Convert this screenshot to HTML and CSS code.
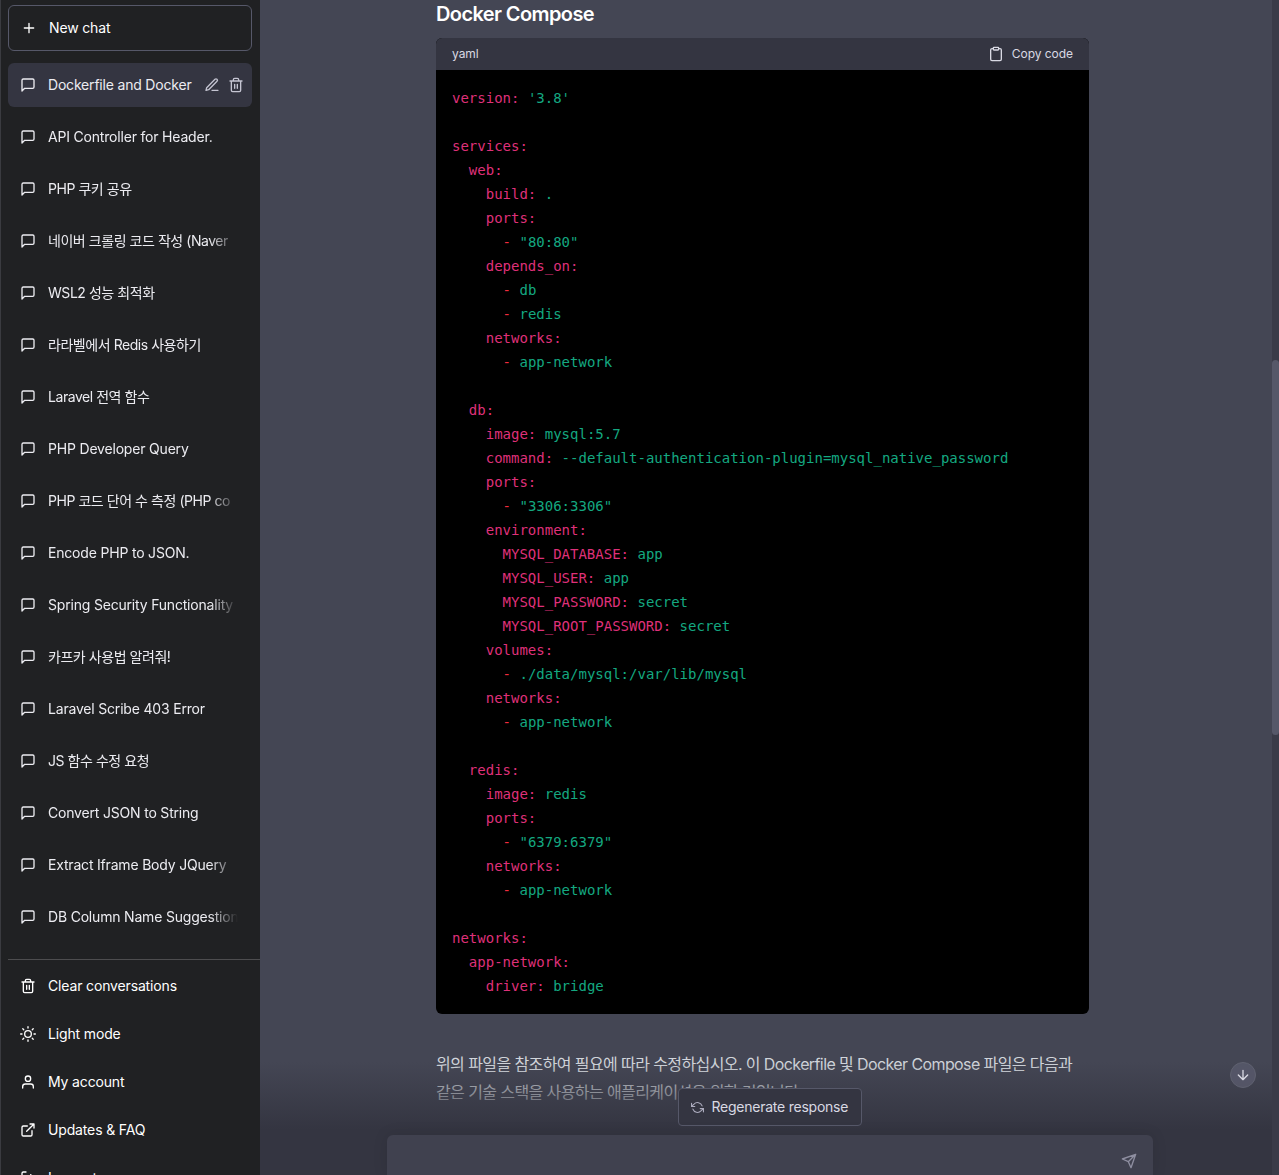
FILE: index.html
```html
<!DOCTYPE html>
<html lang="ko">
<head>
  <meta charset="UTF-8">
  <title>Dockerfile and Docker</title>
  <link rel="stylesheet" href="styles.css">
</head>
<body>
  <svg class="icon-defs" width="0" height="0" aria-hidden="true">
    <symbol id="i-chat" viewBox="0 0 24 24"><path d="M21 15a2 2 0 0 1-2 2H7l-4 4V5a2 2 0 0 1 2-2h14a2 2 0 0 1 2 2z"/></symbol>
    <symbol id="i-trash" viewBox="0 0 24 24"><path d="M3 6h18M19 6v14a2 2 0 0 1-2 2H7a2 2 0 0 1-2-2V6m3 0V4a2 2 0 0 1 2-2h4a2 2 0 0 1 2 2v2M10 11v6M14 11v6"/></symbol>
  </svg>

  <aside class="sidebar">
    <button class="new-chat">
      <svg class="icon" viewBox="0 0 24 24"><path d="M12 5v14M5 12h14"/></svg>
      <span class="label">New chat</span>
    </button>

    <nav class="chat-list">
      <div class="chat-item active">
        <svg class="icon"><use href="#i-chat"/></svg>
        <span class="chat-title">Dockerfile and Docker</span>
        <svg class="icon action" viewBox="0 0 24 24"><path d="M12 20h9M16.5 3.5a2.1 2.1 0 0 1 3 3L7 19l-4 1 1-4z"/></svg>
        <svg class="icon action"><use href="#i-trash"/></svg>
      </div>
      <div class="chat-item"><svg class="icon"><use href="#i-chat"/></svg><span class="chat-title">API Controller for Header.</span></div>
      <div class="chat-item"><svg class="icon"><use href="#i-chat"/></svg><span class="chat-title ko">PHP 쿠키 공유</span></div>
      <div class="chat-item"><svg class="icon"><use href="#i-chat"/></svg><span class="chat-title ko">네이버 크롤링 코드 작성 (Naver</span></div>
      <div class="chat-item"><svg class="icon"><use href="#i-chat"/></svg><span class="chat-title ko">WSL2 성능 최적화</span></div>
      <div class="chat-item"><svg class="icon"><use href="#i-chat"/></svg><span class="chat-title ko">라라벨에서 Redis 사용하기</span></div>
      <div class="chat-item"><svg class="icon"><use href="#i-chat"/></svg><span class="chat-title ko">Laravel 전역 함수</span></div>
      <div class="chat-item"><svg class="icon"><use href="#i-chat"/></svg><span class="chat-title">PHP Developer Query</span></div>
      <div class="chat-item"><svg class="icon"><use href="#i-chat"/></svg><span class="chat-title ko">PHP 코드 단어 수 측정 (PHP co</span></div>
      <div class="chat-item"><svg class="icon"><use href="#i-chat"/></svg><span class="chat-title">Encode PHP to JSON.</span></div>
      <div class="chat-item"><svg class="icon"><use href="#i-chat"/></svg><span class="chat-title">Spring Security Functionality</span></div>
      <div class="chat-item"><svg class="icon"><use href="#i-chat"/></svg><span class="chat-title ko">카프카 사용법 알려줘!</span></div>
      <div class="chat-item"><svg class="icon"><use href="#i-chat"/></svg><span class="chat-title">Laravel Scribe 403 Error</span></div>
      <div class="chat-item"><svg class="icon"><use href="#i-chat"/></svg><span class="chat-title ko">JS 함수 수정 요청</span></div>
      <div class="chat-item"><svg class="icon"><use href="#i-chat"/></svg><span class="chat-title">Convert JSON to String</span></div>
      <div class="chat-item"><svg class="icon"><use href="#i-chat"/></svg><span class="chat-title">Extract Iframe Body JQuery</span></div>
      <div class="chat-item"><svg class="icon"><use href="#i-chat"/></svg><span class="chat-title">DB Column Name Suggestion</span></div>
    </nav>

    <div class="side-bottom">
      <div class="side-link"><svg class="icon"><use href="#i-trash"/></svg><span class="label">Clear conversations</span></div>
      <div class="side-link">
        <svg class="icon" viewBox="0 0 24 24"><circle cx="12" cy="12" r="5"/><path d="M12 1v2M12 21v2M4.2 4.2l1.4 1.4M18.4 18.4l1.4 1.4M1 12h2M21 12h2M4.2 19.8l1.4-1.4M18.4 5.6l1.4-1.4"/></svg>
        <span class="label">Light mode</span>
      </div>
      <div class="side-link">
        <svg class="icon" viewBox="0 0 24 24"><path d="M20 21v-2a4 4 0 0 0-4-4H8a4 4 0 0 0-4 4v2"/><circle cx="12" cy="7" r="4"/></svg>
        <span class="label">My account</span>
      </div>
      <div class="side-link">
        <svg class="icon" viewBox="0 0 24 24"><path d="M18 13v6a2 2 0 0 1-2 2H5a2 2 0 0 1-2-2V8a2 2 0 0 1 2-2h6M15 3h6v6M10 14 21 3"/></svg>
        <span class="label">Updates &amp; FAQ</span>
      </div>
      <div class="side-link">
        <svg class="icon" viewBox="0 0 24 24"><path d="M9 21H5a2 2 0 0 1-2-2V5a2 2 0 0 1 2-2h4M16 17l5-5-5-5M21 12H9"/></svg>
        <span class="label">Log out</span>
      </div>
    </div>
  </aside>

  <main class="main">
    <div class="thread">
      <h3 class="heading">Docker Compose</h3>
      <div class="code-block">
        <div class="code-head">
          <span class="label">yaml</span>
          <span class="copy">
            <svg class="icon" viewBox="0 0 24 24"><path d="M16 4h2a2 2 0 0 1 2 2v14a2 2 0 0 1-2 2H6a2 2 0 0 1-2-2V6a2 2 0 0 1 2-2h2"/><rect x="8" y="2" width="8" height="4" rx="1"/></svg>
            <span class="label">Copy code</span>
          </span>
        </div>
<pre class="code"><b>version:</b> <i>'3.8'</i>

<b>services:</b>
  <b>web:</b>
    <b>build:</b> <i>.</i>
    <b>ports:</b>
      <u>-</u> <i>"80:80"</i>
    <b>depends_on:</b>
      <u>-</u> <i>db</i>
      <u>-</u> <i>redis</i>
    <b>networks:</b>
      <u>-</u> <i>app-network</i>

  <b>db:</b>
    <b>image:</b> <i>mysql:5.7</i>
    <b>command:</b> <i>--default-authentication-plugin=mysql_native_password</i>
    <b>ports:</b>
      <u>-</u> <i>"3306:3306"</i>
    <b>environment:</b>
      <b>MYSQL_DATABASE:</b> <i>app</i>
      <b>MYSQL_USER:</b> <i>app</i>
      <b>MYSQL_PASSWORD:</b> <i>secret</i>
      <b>MYSQL_ROOT_PASSWORD:</b> <i>secret</i>
    <b>volumes:</b>
      <u>-</u> <i>./data/mysql:/var/lib/mysql</i>
    <b>networks:</b>
      <u>-</u> <i>app-network</i>

  <b>redis:</b>
    <b>image:</b> <i>redis</i>
    <b>ports:</b>
      <u>-</u> <i>"6379:6379"</i>
    <b>networks:</b>
      <u>-</u> <i>app-network</i>

<b>networks:</b>
  <b>app-network:</b>
    <b>driver:</b> <i>bridge</i></pre>
      </div>
      <p class="answer">위의 파일을 참조하여 필요에 따라 수정하십시오. 이 Dockerfile 및 Docker Compose 파일은 다음과 같은 기술 스택을 사용하는 애플리케이션을 위한 것입니다.</p>
    </div>

    <div class="fade"></div>

    <button class="scroll-down">
      <svg class="icon" viewBox="0 0 24 24"><path d="M12 5v14M19 12l-7 7-7-7"/></svg>
    </button>

    <div class="composer">
      <button class="regen">
        <svg class="icon" viewBox="0 0 24 24"><path d="M1 4v6h6M23 20v-6h-6"/><path d="M20.5 9A9 9 0 0 0 5.6 5.6L1 10m22 4-4.6 4.4A9 9 0 0 1 3.5 15"/></svg>
        <span class="label">Regenerate response</span>
      </button>
      <div class="input-box">
        <svg class="icon send" viewBox="0 0 24 24"><path d="M22 2 11 13M22 2l-7 20-4-9-9-4z"/></svg>
      </div>
    </div>

    <div class="scrollbar"><div class="scroll-thumb"></div></div>
  </main>
</body>
</html>
```

FILE: styles.css
```css
* {
  box-sizing: border-box;
}

html, body {
  height: 100%;
}

body {
  margin: 0;
  display: flex;
  overflow: hidden;
  font-family: Inter, "Noto Sans CJK KR", sans-serif;
  font-size: 14px;
  color: #ececf1;
  background: #444654;
}

.icon-defs {
  position: absolute;
}

.icon {
  width: 16px;
  height: 16px;
  flex: none;
  fill: none;
  stroke: currentColor;
  stroke-width: 2;
  stroke-linecap: round;
  stroke-linejoin: round;
}

/* text sits 1px above the icon centre */
.label {
  margin-bottom: 2px;
  letter-spacing: -0.15px;
  white-space: nowrap;
}

/* sidebar */
.sidebar {
  width: 260px;
  height: 100%;
  flex: none;
  display: flex;
  flex-direction: column;
  padding: 5px 0 0 8px;
  background: #202123;
  border-left: 1px solid #3a3b40;
  overflow: hidden;
}

.new-chat {
  width: 244px;
  height: 46px;
  margin-left: -1px;
  flex: none;
  display: flex;
  align-items: center;
  gap: 12px;
  padding: 0 12px;
  font: inherit;
  color: #fff;
  background: none;
  border: 1px solid #565869;
  border-radius: 6px;
}

.chat-list {
  height: 896px;
  flex: none;
  margin-top: 12px;
  margin-left: -1px;
  width: 244px;
  display: flex;
  flex-direction: column;
  gap: 8px;
}

.chat-item {
  height: 44px;
  flex: none;
  display: flex;
  align-items: center;
  gap: 12px;
  padding: 0 14px 0 12px;
  color: #ececf1;
  border-radius: 6px;
}

.chat-item.active {
  padding-right: 8px;
  background: #343541;
}

.chat-title {
  flex: 1;
  min-width: 0;
  margin-bottom: 2px;
  letter-spacing: -0.19px;
  overflow: hidden;
  white-space: nowrap;
  -webkit-mask-image: linear-gradient(to right, #000 85%, transparent);
  mask-image: linear-gradient(to right, #000 85%, transparent);
}

.chat-title.ko {
  letter-spacing: -0.45px;
}

.active .chat-title {
  -webkit-mask-image: none;
  mask-image: none;
}

.chat-item .action {
  color: #c5c5d2;
  margin-left: -4px;
}

.side-bottom {
  flex: none;
  margin-left: -1px;
  border-top: 1px solid #4d4d4f;
  padding-top: 2px;
}

.side-link {
  height: 48px;
  display: flex;
  align-items: center;
  gap: 12px;
  padding-left: 12px;
  color: #fff;
}

/* main column */
.main {
  flex: 1;
  position: relative;
  height: 100%;
  overflow: hidden;
}

.thread {
  width: 653px;
  margin-left: 176px;
}

.heading {
  margin: 0;
  padding-top: 2px;
  height: 38px;
  font-size: 20px;
  line-height: 25px;
  font-weight: 600;
  letter-spacing: -0.6px;
  color: #fff;
}

.code-block {
  height: 976px;
  background: #000;
  border-radius: 6px;
  overflow: hidden;
}

.code-head {
  height: 32px;
  display: flex;
  align-items: center;
  justify-content: space-between;
  padding: 0 16px;
  font-size: 12px;
  color: #d9d9e3;
  background: #343541;
}

.code-head .label {
  letter-spacing: -0.05px;
}

.copy {
  display: flex;
  align-items: center;
  gap: 8px;
}

.code {
  margin: 0;
  padding: 16px;
  font-family: "DejaVu Sans Mono", monospace;
  font-size: 14px;
  line-height: 24px;
  color: #fff;
}

.code b {
  font-weight: 400;
  color: #df3079;
}

.code i {
  font-style: normal;
  color: #14a880;
}

.code u {
  text-decoration: none;
  color: #f22c3d;
}

.answer {
  margin: 36px 0 0;
  font-size: 16px;
  line-height: 28px;
  letter-spacing: -0.6px;
  color: #d1d5db;
}

.fade {
  position: absolute;
  left: 0;
  right: 0;
  bottom: 0;
  height: 113px;
  background: linear-gradient(to bottom, rgba(52, 53, 65, 0) 0%, #343541 60%, #343541 100%);
}

.scroll-down {
  position: absolute;
  left: 970px;
  top: 1062px;
  width: 26px;
  height: 26px;
  display: flex;
  align-items: center;
  justify-content: center;
  padding: 0;
  color: #d9d9e3;
  background: rgba(86, 88, 105, 0.9);
  border: 1px solid #5f6170;
  border-radius: 50%;
}

.composer {
  position: absolute;
  left: 127px;
  bottom: 0;
  width: 766px;
  display: flex;
  flex-direction: column;
  align-items: center;
  gap: 9px;
}

.regen {
  width: 184px;
  height: 38px;
  margin-left: -1px;
  display: flex;
  align-items: center;
  gap: 8px;
  padding: 0 12px;
  font: inherit;
  font-size: 14px;
  color: #d9d9e3;
  background: #343541;
  border: 1px solid #565869;
  border-radius: 4px;
}

.regen .label {
  letter-spacing: -0.24px;
}

.regen .icon {
  width: 13px;
  height: 13px;
  color: #acacbe;
}

.input-box {
  width: 766px;
  height: 40px;
  display: flex;
  justify-content: flex-end;
  padding: 18px 16px 0 0;
  color: #8e8ea0;
  background: #40414f;
  border-radius: 6px 6px 0 0;
  box-shadow: 0 0 15px rgba(0, 0, 0, 0.1);
}

.scrollbar {
  position: absolute;
  top: 0;
  right: 0;
  bottom: 0;
  width: 7px;
  background: #3a3b48;
}

.scroll-thumb {
  height: 375px;
  margin-top: 360px;
  background: #565869;
  border-radius: 4px;
}
```
